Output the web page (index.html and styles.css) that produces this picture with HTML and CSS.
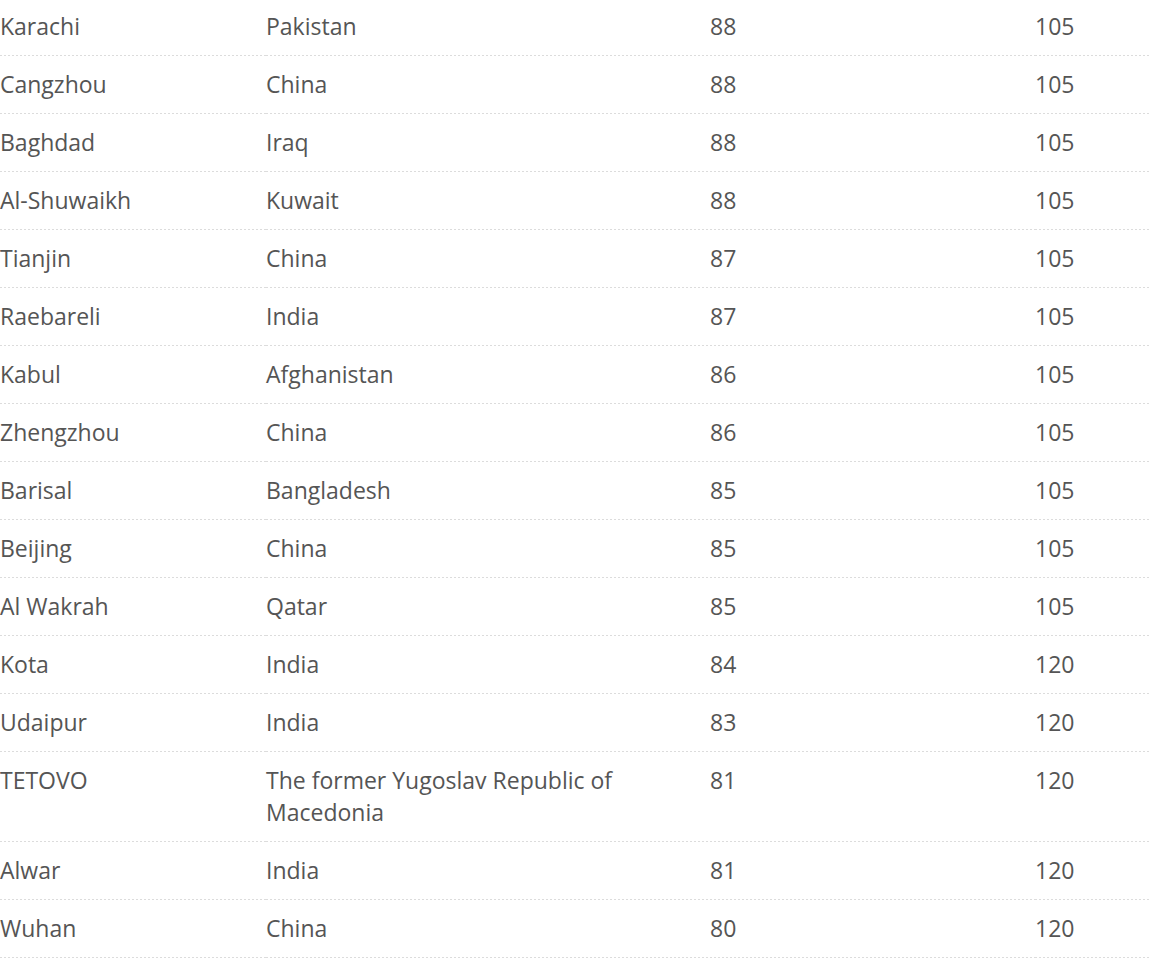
FILE: index.html
```html
<!DOCTYPE html>
<html lang="en">
<head>
<meta charset="utf-8">
<title>Cities</title>
<link rel="stylesheet" href="styles.css">
</head>
<body>
<table class="data">
  <colgroup>
    <col class="c-city">
    <col class="c-country">
    <col class="c-pm">
    <col class="c-rank">
  </colgroup>
  <tbody>
    <tr><td>Karachi</td><td>Pakistan</td><td>88</td><td>105</td></tr>
    <tr><td>Cangzhou</td><td>China</td><td>88</td><td>105</td></tr>
    <tr><td>Baghdad</td><td>Iraq</td><td>88</td><td>105</td></tr>
    <tr><td>Al-Shuwaikh</td><td>Kuwait</td><td>88</td><td>105</td></tr>
    <tr><td>Tianjin</td><td>China</td><td>87</td><td>105</td></tr>
    <tr><td>Raebareli</td><td>India</td><td>87</td><td>105</td></tr>
    <tr><td>Kabul</td><td>Afghanistan</td><td>86</td><td>105</td></tr>
    <tr><td>Zhengzhou</td><td>China</td><td>86</td><td>105</td></tr>
    <tr><td>Barisal</td><td>Bangladesh</td><td>85</td><td>105</td></tr>
    <tr><td>Beijing</td><td>China</td><td>85</td><td>105</td></tr>
    <tr><td>Al Wakrah</td><td>Qatar</td><td>85</td><td>105</td></tr>
    <tr><td>Kota</td><td>India</td><td>84</td><td>120</td></tr>
    <tr><td>Udaipur</td><td>India</td><td>83</td><td>120</td></tr>
    <tr><td>TETOVO</td><td>The former Yugoslav Republic of Macedonia</td><td>81</td><td>120</td></tr>
    <tr><td>Alwar</td><td>India</td><td>81</td><td>120</td></tr>
    <tr><td>Wuhan</td><td>China</td><td>80</td><td>120</td></tr>
  </tbody>
</table>
</body>
</html>
```

FILE: styles.css
```css
html, body {
  margin: 0;
  padding: 0;
  background: #ffffff;
}

.data {
  width: 1150px;
  margin-top: -2px;
  border-collapse: collapse;
  table-layout: fixed;
  font-family: "Open Sans", "Liberation Sans", sans-serif;
  font-size: 23px;
  line-height: 32px;
  color: #555555;
}

.c-city { width: 266px; }
.c-country { width: 444px; }
.c-pm { width: 325px; }
.c-rank { width: auto; }

.data td {
  vertical-align: top;
  text-align: left;
  padding: 12px 0 14px;
  background-image: repeating-linear-gradient(to right, #dcdcdc 0 2px, transparent 2px 4px);
  background-size: 100% 1px;
  background-position: left bottom;
  background-repeat: no-repeat;
}

.data td:nth-child(2) {
  padding-right: 80px;
}
```
